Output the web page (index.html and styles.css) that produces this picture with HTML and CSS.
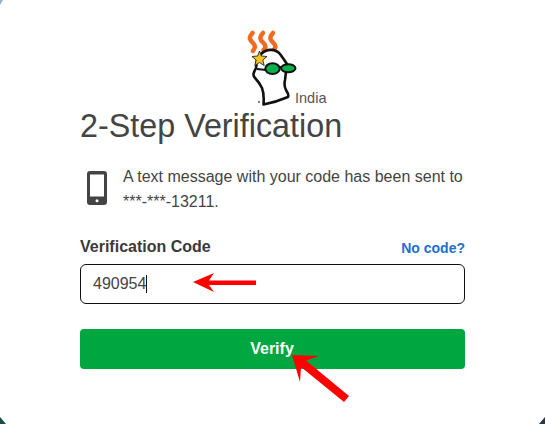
FILE: index.html
```html
<!DOCTYPE html>
<html lang="en">
<head>
<meta charset="utf-8">
<title>2-Step Verification</title>
<link rel="stylesheet" href="styles.css">
</head>
<body>
<main class="card">
  <div class="brand">
    <svg class="logo" width="50" height="76" viewBox="0 0 50 76" aria-hidden="true">
      <g fill="none" stroke="#f26a21" stroke-width="4.500" stroke-linecap="round">
        <path d="M4.500 3C0 8 2 10 5 13C8 16 7 18 5 21"/>
        <path d="M15 3C10.500 8 12.500 10 15.500 13C18.500 16 17.500 18 15.500 20"/>
        <path d="M25 3C20.500 8 22.500 10 25.500 13C28.500 16 27.500 18 25.500 20"/>
      </g>
      <path d="M13 24C18 19 27 18 32 24C35 28 37 31 39 34L37 50C36 54 37 58 38 60C40 63 41 65 40 67C33 70 24 73 15.500 74.500C16 68 16 63 14 58C12 54 10 51 7 48C4 45 6 42 8 38L9 30Z" fill="#fff" stroke="#111" stroke-width="2.600" stroke-linejoin="round"/>
      <path d="M9 39L18 40M31 37L34 37" fill="none" stroke="#111" stroke-width="2"/>
      <ellipse cx="24.500" cy="38.700" rx="7.200" ry="5.400" fill="#08b14a" stroke="#111" stroke-width="2"/>
      <ellipse cx="40.300" cy="38.200" rx="7.200" ry="4" fill="#08b14a" stroke="#111" stroke-width="2"/>
      <path d="M11.500 21L13.300 26L19 26.500L14.800 30L16.200 35.500L11.500 32.500L6.800 35.500L8.200 30L4 26.500L9.700 26Z" fill="#f6c324" stroke="#222" stroke-width=".9"/>
      <circle cx="11" cy="72" r="1" fill="#555"/>
    </svg>
    <span class="region">India</span>
  </div>
  <h1 class="title">2-Step Verification</h1>
  <div class="message">
    <svg class="phone" width="20" height="34" viewBox="0 0 20 34" aria-hidden="true">
      <rect width="20" height="34" rx="3" fill="#444"/>
      <rect x="3" y="3.500" width="14" height="22" fill="#fff"/>
      <circle cx="10" cy="29.800" r="1.500" fill="#fff"/>
    </svg>
    <p class="message-text">A text message with your code has been sent to<br>***-***-13211.</p>
  </div>
  <div class="label-row">
    <label class="label" for="code">Verification Code</label>
    <a class="help" href="#">No code?</a>
  </div>
  <div class="field" id="code"><span>490954</span><i class="caret"></i></div>
  <button class="verify" type="button">Verify</button>
</main>
<svg class="marks" width="545" height="424" viewBox="0 0 545 424" aria-hidden="true">
  <path d="M193 282L214 273L209 280.500H256V285H209L214 292Z" fill="#f00"/>
  <path d="M292 355L319 356L306 360.500L349 396L344 402L301 367L300 382Z" fill="#f00"/>
  <path d="M0 417L6 424H0Z" fill="#1f4a4a"/>
  <path d="M545 417L539 424H545Z" fill="#1f3a4a"/>
  <path d="M0 0H3L0 5Z" fill="#8fb4d0"/>
</svg>
</body>
</html>
```
FILE: styles.css
```css
html, body {
  margin: 0;
  height: 100%;
}
body {
  position: relative;
  width: 545px;
  height: 424px;
  overflow: hidden;
  background: #fff;
  color: #444;
  font-family: "Liberation Sans", Arial, sans-serif;
}
.card {
  box-sizing: border-box;
  width: 385px;
  margin-left: 80px;
  padding-top: 28px;
}
.brand {
  display: flex;
  align-items: flex-end;
  height: 78px;
  padding-left: 168px;
}
.logo {
  flex: none;
  overflow: visible;
}
.region {
  margin-left: -3px;
  font-size: 14.500px;
  line-height: 16px;
  color: #555;
}
.title {
  margin: 1px 0 0;
  font-size: 32.300px;
  font-weight: 400;
  line-height: 38px;
  color: #444;
}
.message {
  display: flex;
  align-items: flex-start;
  margin: 19px 0 0 7px;
}
.phone {
  flex: none;
  margin: 7px 16px 0 0;
}
.message-text {
  flex: none;
  margin: 0;
  font-size: 16px;
  line-height: 25px;
}
.label-row {
  display: flex;
  align-items: flex-end;
  justify-content: space-between;
  margin-top: 23px;
}
.label {
  font-size: 16px;
  font-weight: 700;
  line-height: 20px;
  color: #3a3a3a;
}
.help {
  font-size: 14px;
  font-weight: 700;
  line-height: 18px;
  color: #1b6fd1;
  text-decoration: none;
}
.field {
  display: flex;
  align-items: center;
  box-sizing: border-box;
  height: 40px;
  margin-top: 7px;
  padding-left: 12px;
  border: 1.500px solid #111;
  border-radius: 6px;
  font-size: 16px;
  color: #444;
}
.caret {
  width: 1px;
  height: 18px;
  background: #111;
}
.verify {
  display: block;
  width: 100%;
  height: 40px;
  margin-top: 25px;
  padding: 0 1px 0 0;
  border: 0;
  border-radius: 4px;
  background: #00a63f;
  color: #fff;
  font: 700 16px "Liberation Sans", Arial, sans-serif;
}
.marks {
  position: absolute;
  left: 0;
  top: 0;
  pointer-events: none;
}
```
